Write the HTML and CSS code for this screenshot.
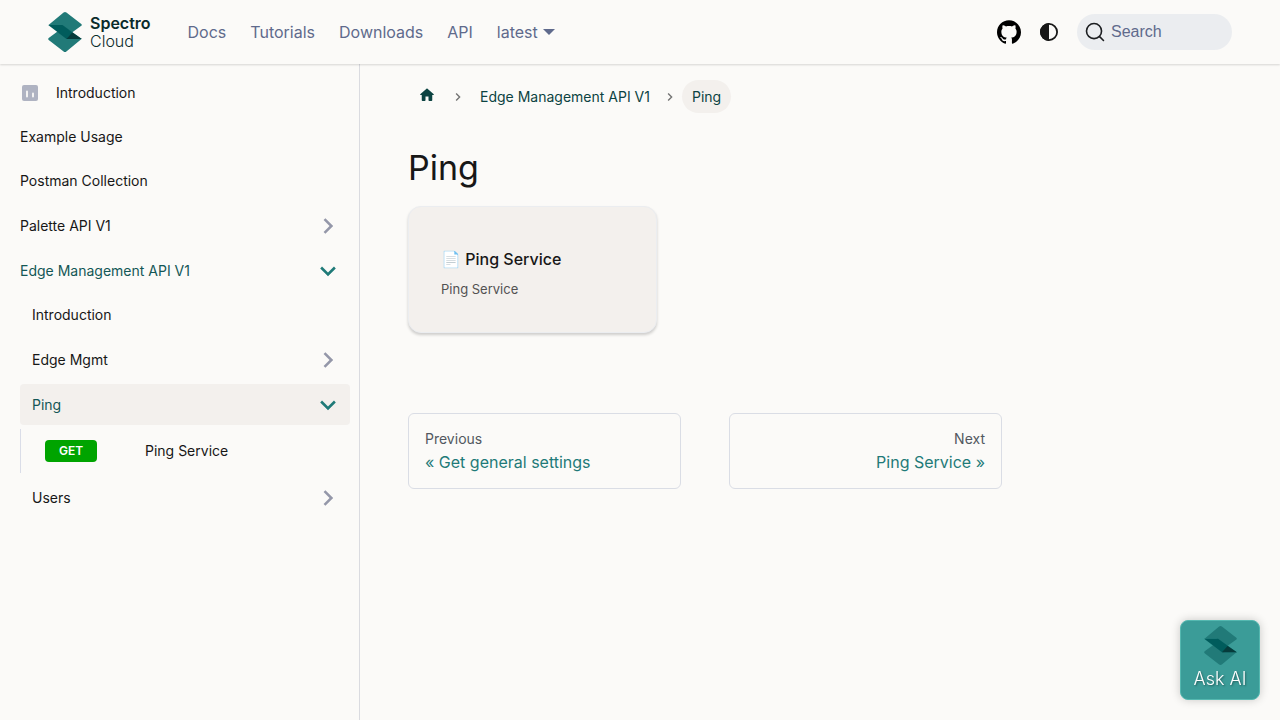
FILE: index.html
```html
<!DOCTYPE html>
<html lang="en">
<head>
<meta charset="utf-8">
<meta name="viewport" content="width=device-width, initial-scale=1">
<title>Ping | Spectro Cloud</title>
<link rel="stylesheet" href="styles.css">
</head>
<body>
<svg class="defs" aria-hidden="true">
  <symbol id="mark" viewBox="0 0 34 40">
    <path d="M15.600.5Q17-.5 18.400.5L33.300 12Q34.300 13 33.300 13.800L24 20.500 13 13H.5z" fill="#217a78"/>
    <path d="M9.500 19.500 21 27H33.500L18.400 39.500Q17 40.500 15.600 39.500L.7 28Q-.3 27 .7 26z" fill="#217a78"/>
    <path d="M.2 13H14.500L33.800 27H18.500z" fill="#005c5c"/>
    <path d="M24.300 20.500 33.800 27H18.500z" fill="#063b3b"/>
  </symbol>
  <symbol id="chevron" viewBox="0 0 24 24">
    <path d="M8.600 16.600 13.200 12 8.600 7.400 10 6l6 6-6 6z" fill="currentColor"/>
  </symbol>
</svg>

<header class="navbar">
  <a class="brand" href="#" aria-label="Spectro Cloud">
    <svg class="brand-mark"><use href="#mark"/></svg>
    <span class="brand-text"><b>Spectro</b><span>Cloud</span></span>
  </a>
  <nav class="nav-links" aria-label="Main">
    <a href="#">Docs</a>
    <a href="#">Tutorials</a>
    <a href="#">Downloads</a>
    <a href="#">API</a>
    <a class="dropdown" href="#">latest</a>
  </nav>
  <div class="nav-tools">
    <a class="github" href="#" aria-label="GitHub repository">
      <svg width="24" height="24" viewBox="0 0 24 24"><path d="M12 .297c-6.630 0-12 5.373-12 12 0 5.303 3.438 9.800 8.205 11.385.6.113.82-.258.82-.577 0-.285-.01-1.040-.015-2.040-3.338.724-4.042-1.610-4.042-1.610C4.422 18.070 3.633 17.700 3.633 17.700c-1.087-.744.084-.729.084-.729 1.205.084 1.838 1.236 1.838 1.236 1.070 1.835 2.809 1.305 3.495.998.108-.776.417-1.305.76-1.605-2.665-.3-5.466-1.332-5.466-5.930 0-1.310.465-2.380 1.235-3.220-.135-.303-.54-1.523.105-3.176 0 0 1.005-.322 3.300 1.230.96-.267 1.980-.399 3-.405 1.020.006 2.040.138 3 .405 2.280-1.552 3.285-1.230 3.285-1.230.645 1.653.24 2.873.12 3.176.765.84 1.230 1.910 1.230 3.220 0 4.610-2.805 5.625-5.475 5.920.42.36.81 1.096.81 2.220 0 1.606-.015 2.896-.015 3.286 0 .315.21.69.825.57C20.565 22.092 24 17.592 24 12.297c0-6.627-5.373-12-12-12"/></svg>
    </a>
    <button class="theme" type="button" aria-label="Switch theme">
      <svg width="18" height="18" viewBox="0 0 18 18"><circle cx="9" cy="9" r="8.100" fill="none" stroke="#171717" stroke-width="1.800"/><path d="M9 0A9 9 0 0 0 9 18z" fill="#171717"/></svg>
    </button>
    <button class="search" type="button">
      <svg width="20" height="20" viewBox="0 0 20 20"><path d="M14.386 14.386l4.088 4.088-4.088-4.088A7.533 7.533 0 1 1 3.733 3.733a7.533 7.533 0 0 1 10.653 10.653z" stroke="#1c1e21" stroke-width="1.600" fill="none" stroke-linecap="round" stroke-linejoin="round"/></svg>
      <span>Search</span>
    </button>
  </div>
</header>

<div class="layout">
  <aside class="sidebar">
    <nav aria-label="Docs sidebar">
      <ul class="menu">
        <li><a class="item with-icon" href="#">
          <svg width="20" height="20" viewBox="0 0 20 20"><rect x="2" y="2" width="16" height="16" rx="2" fill="#afb3c2"/><path d="M7 8.500v5M13 10.500v3" stroke="#fbfaf8" stroke-width="1.800" stroke-linecap="round"/></svg>
          <span>Introduction</span></a></li>
        <li><a class="item" href="#">Example Usage</a></li>
        <li><a class="item" href="#">Postman Collection</a></li>
        <li><a class="item category" href="#">Palette API V1<svg class="caret"><use href="#chevron"/></svg></a></li>
        <li>
          <a class="item category open" href="#">Edge Management API V1<svg class="caret"><use href="#chevron"/></svg></a>
          <ul class="menu nested">
            <li><a class="item" href="#">Introduction</a></li>
            <li><a class="item category" href="#">Edge Mgmt<svg class="caret"><use href="#chevron"/></svg></a></li>
            <li>
              <a class="item category open current" href="#" aria-current="page">Ping<svg class="caret"><use href="#chevron"/></svg></a>
              <ul class="menu methods">
                <li><a class="method" href="#"><span class="badge">GET</span><span>Ping Service</span></a></li>
              </ul>
            </li>
            <li><a class="item category" href="#">Users<svg class="caret"><use href="#chevron"/></svg></a></li>
          </ul>
        </li>
      </ul>
    </nav>
  </aside>

  <main class="main">
    <div class="content">
      <nav aria-label="Breadcrumbs">
        <ol class="crumbs">
          <li><a class="home" href="#" aria-label="Home page"><svg width="18" height="18" viewBox="0 0 24 24"><path d="M10 19v-5h4v5c0 .55.45 1 1 1h3c.55 0 1-.45 1-1v-7h1.700c.46 0 .68-.57.33-.87L12.670 3.600c-.38-.34-.96-.34-1.340 0l-8.360 7.530c-.34.300-.13.870.33.870H5v7c0 .55.45 1 1 1h3c.55 0 1-.45 1-1z" fill="#0c4342"/></svg></a></li>
          <li><svg class="sep" viewBox="0 0 8 8"><path d="M2.500 1.200 5.300 4 2.500 6.800" fill="none" stroke="#737373" stroke-width="1.100"/></svg><a href="#">Edge Management API V1</a></li>
          <li><svg class="sep" viewBox="0 0 8 8"><path d="M2.500 1.200 5.300 4 2.500 6.800" fill="none" stroke="#737373" stroke-width="1.100"/></svg><span class="here">Ping</span></li>
        </ol>
      </nav>
      <h1>Ping</h1>
      <section class="cards">
        <a class="card" href="#">
          <h2>📄️ Ping Service</h2>
          <p>Ping Service</p>
        </a>
      </section>
      <nav class="pager" aria-label="Docs pages">
        <a href="#"><span class="sub">Previous</span><span class="label">« Get general settings</span></a>
        <a class="next" href="#"><span class="sub">Next</span><span class="label">Ping Service »</span></a>
      </nav>
    </div>
  </main>
</div>

<button class="ask" type="button"><svg><use href="#mark"/></svg><span>Ask AI</span></button>
</body>
</html>
```
FILE: styles.css
```css
* { box-sizing: border-box; }
body {
  margin: 0;
  min-height: 100vh;
  display: flex;
  flex-direction: column;
  background: #fbfaf8;
  color: #171717;
  font: 400 16px/24px Inter, "Noto Sans", sans-serif;
}
a { color: inherit; text-decoration: none; }
button { border: 0; padding: 0; background: none; cursor: pointer; }
ul, ol { list-style: none; margin: 0; padding: 0; }
svg { display: block; flex: none; }
.defs { position: absolute; width: 0; height: 0; }

.navbar {
  position: sticky;
  top: 0;
  z-index: 2;
  display: flex;
  align-items: center;
  min-height: 64px;
  padding: 0 48px;
  background: #fbfaf8;
  box-shadow: 0 1px 2px rgba(0, 0, 0, .15);
}
.brand { display: flex; align-items: center; gap: 8px; margin-right: 25px; color: #0a2b2b; }
.brand-mark { width: 34px; height: 40px; }
.brand-text { display: flex; flex-direction: column; font-size: 16px; line-height: 18px; }
.brand-text b { font-weight: 600; }
.brand-text span { font-weight: 300; }
.nav-links { display: flex; color: #5f6a8c; }
.nav-links a { padding: 0 12px; }
.dropdown { display: flex; align-items: center; gap: 5px; }
.dropdown::after {
  content: "";
  border: 6px solid transparent;
  border-top-color: currentColor;
  border-bottom: 0;
}
.nav-tools { display: flex; align-items: center; margin-left: auto; }
.theme { margin: 0 19px; }
.search {
  display: flex;
  align-items: center;
  gap: 6px;
  width: 155px;
  height: 36px;
  padding: 0 8px;
  border-radius: 18px;
  background: #ebedf0;
  color: #5f6a8c;
  font: 16px/24px "Liberation Sans", Arial, sans-serif;
}

.layout { display: flex; flex: 1; }
.sidebar {
  flex: 0 0 360px;
  padding: 9px 9px 9px 20px;
  border-right: 1px solid #dadbe0;
  font-size: 14px;
  line-height: 20px;
}
.menu { display: flex; flex-direction: column; gap: 4px; }
.nested, .methods { margin-top: 4px; }
.item { display: flex; align-items: center; min-height: 40px; border-radius: 4px; }
.with-icon { gap: 16px; }
.category { justify-content: space-between; min-height: 41px; padding-right: 10px; }
.nested .item { padding-left: 12px; }
.caret { width: 24px; height: 24px; color: #9497a9; transform: scale(1.3); }
.open { color: #135756; }
.open .caret { color: #1f7a78; transform: rotate(90deg) scale(1.3); }
.current { background: #f3f0ed; }
.methods { border-left: 1px solid #dadde8; }
.method { display: flex; align-items: center; gap: 48px; min-height: 44px; padding-left: 24px; }
.badge {
  width: 52px;
  border-radius: 4px;
  background: #00a400;
  color: #fff;
  font-size: 12px;
  line-height: 22px;
  font-weight: 600;
  text-align: center;
}

.main { flex: 1; min-width: 0; padding: 16px 48px; display: grid; grid-template-columns: 3fr 1fr; column-gap: 32px; align-items: start; }
.crumbs { display: flex; align-items: center; min-height: 33px; font-size: 14px; line-height: 21px; color: #0c4342; }
.crumbs li { display: flex; align-items: center; }
.crumbs a { padding: 0 8px 0 10px; }
.crumbs .home { padding: 0 10px 4px; }
.sep { width: 10px; height: 10px; margin: 0 7px; }
.here { padding: 6px 10px; border-radius: 17px; background: #f3f0ed; }
h1 { margin: 32px 0 16px; font-size: 34px; line-height: 45px; font-weight: 400; }
.cards { display: grid; grid-template-columns: repeat(auto-fill, 249px); gap: 32px; margin-bottom: 80px; }
.card {
  padding: 39px 32px 32px;
  border: 1px solid #ebedf0;
  border-radius: 13px;
  background: #f3f0ed;
  box-shadow: 0 2px 3px rgba(0, 0, 0, .18);
}
.card h2 { margin: 0 0 6px; font-size: 16px; line-height: 26px; font-weight: 500; }
.card p { margin: 0; color: #525252; font-size: 13px; line-height: 22px; }
.pager { display: grid; grid-template-columns: 1fr 1fr; gap: 48px; }
.pager a { display: flex; flex-direction: column; padding: 14px 16px; border: 1px solid #dadde5; border-radius: 6px; }
.pager .next { text-align: right; }
.sub { color: #525860; font-size: 14px; line-height: 22px; }
.label { color: #1f7a78; line-height: 24px; }

.ask {
  position: fixed;
  right: 20px;
  bottom: 20px;
  z-index: 3;
  display: flex;
  flex-direction: column;
  align-items: center;
  gap: 2px;
  width: 80px;
  height: 80px;
  padding-top: 5px;
  border: 1px solid #55b8b0;
  border-radius: 8px;
  background: #3b9c98;
  box-shadow: 0 0 10px rgba(0, 0, 0, .2);
  color: #fff;
  font: 300 18px/24px Inter, sans-serif;
  text-shadow: 1px 1px 2px rgba(0, 0, 0, .4);
}
.ask svg { width: 33px; height: 39px; }
```
